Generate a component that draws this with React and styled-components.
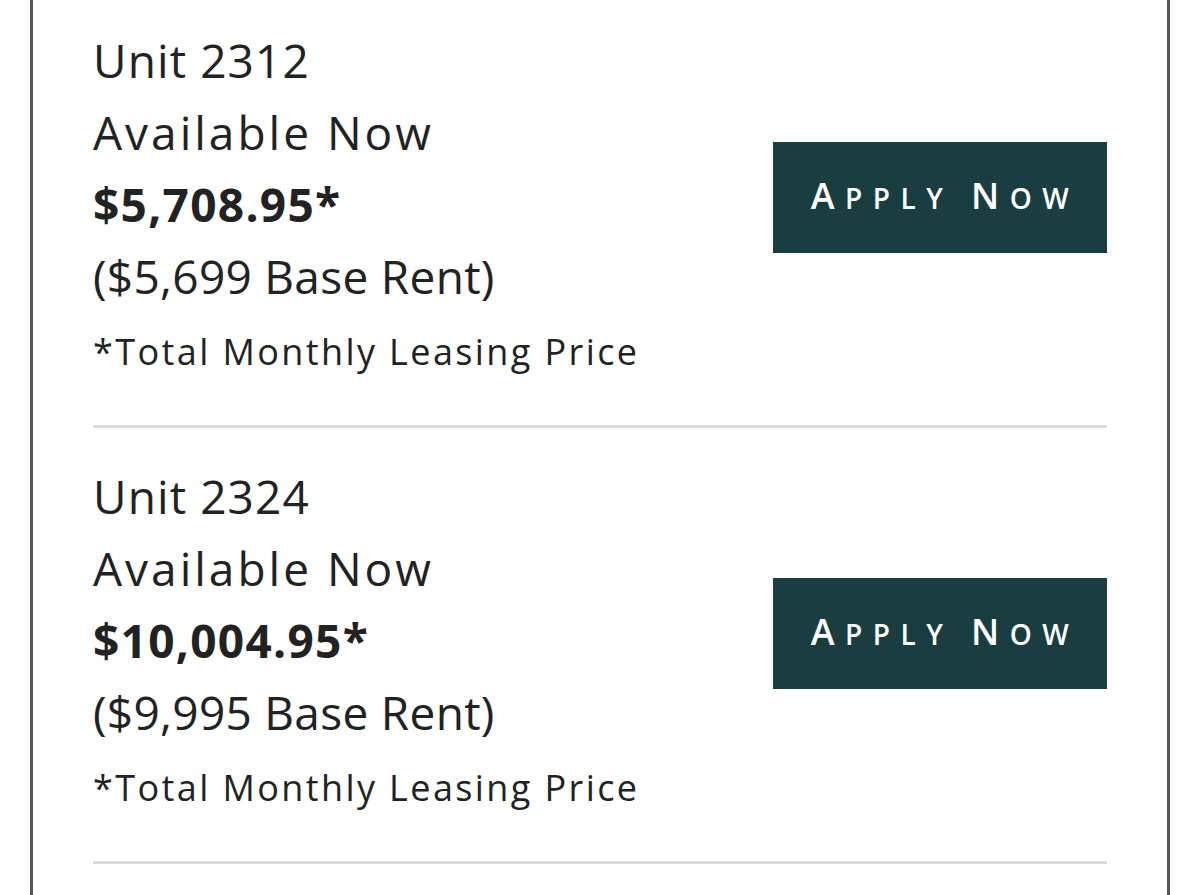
import React from 'react';
import styled, { createGlobalStyle } from 'styled-components';

const GlobalStyle = createGlobalStyle`
    html, body {
        margin: 0;
        padding: 0;
        background: #ffffff;
    }

    body {
        font-family: "Open Sans", "Liberation Sans", sans-serif;
        color: #222222;
        overflow: hidden;
    }
`;

const Panel = styled.section`
    margin: 0 30px;
    min-height: 895px;
    box-sizing: border-box;
    border-left: 3px solid #585858;
    border-right: 3px solid #585858;
    padding: 24px 60px 0;
`;

const Entry = styled.article`
    display: flex;
    justify-content: space-between;
    align-items: flex-start;
    padding: 32px 0 33px;
    border-bottom: 3px solid #dcdcdc;

    &:first-child {
        padding-top: 0;
    }
`;

const Details = styled.div`
    display: flex;
    flex-direction: column;
`;

const Line = styled.p`
    margin: 0;
    font-size: 46px;
    font-weight: ${({ $bold }) => ($bold ? 700 : 400)};
    line-height: 72px;
    letter-spacing: ${({ $track }) => $track}px;
    white-space: nowrap;
`;

const Note = styled.p`
    margin: 0;
    font-size: 36px;
    line-height: 80px;
    letter-spacing: 2.4px;
    white-space: nowrap;
`;

const ApplyButton = styled.button`
    margin-top: 118px;
    width: 334px;
    height: 111px;
    padding: 0 0 4px 10px;
    border: none;
    background: #1a3d3f;
    color: #ffffff;
    font-family: "Open Sans", "Liberation Sans", sans-serif;
    font-size: 28px;
    font-weight: 600;
    text-transform: uppercase;
    letter-spacing: 10.5px;
    white-space: nowrap;
    cursor: pointer;
`;

const Initial = styled.span`
    font-size: 36px;
`;

const units = [
    { unit: '2312', total: '$5,708.95*', base: '($5,699 Base Rent)' },
    { unit: '2324', total: '$10,004.95*', base: '($9,995 Base Rent)' },
];

const App = () => {
    return (
        <>
            <GlobalStyle />
            <Panel>
                {units.map(({ unit, total, base }) => (
                    <Entry key={unit}>
                        <Details>
                            <Line $track={1.1}>Unit {unit}</Line>
                            <Line $track={3}>Available Now</Line>
                            <Line $bold $track={1.3}>{total}</Line>
                            <Line $track={0.3}>{base}</Line>
                            <Note>*Total Monthly Leasing Price</Note>
                        </Details>
                        <ApplyButton>
                            <Initial>A</Initial>pply <Initial>N</Initial>ow
                        </ApplyButton>
                    </Entry>
                ))}
            </Panel>
        </>
    );
};

export default App;
